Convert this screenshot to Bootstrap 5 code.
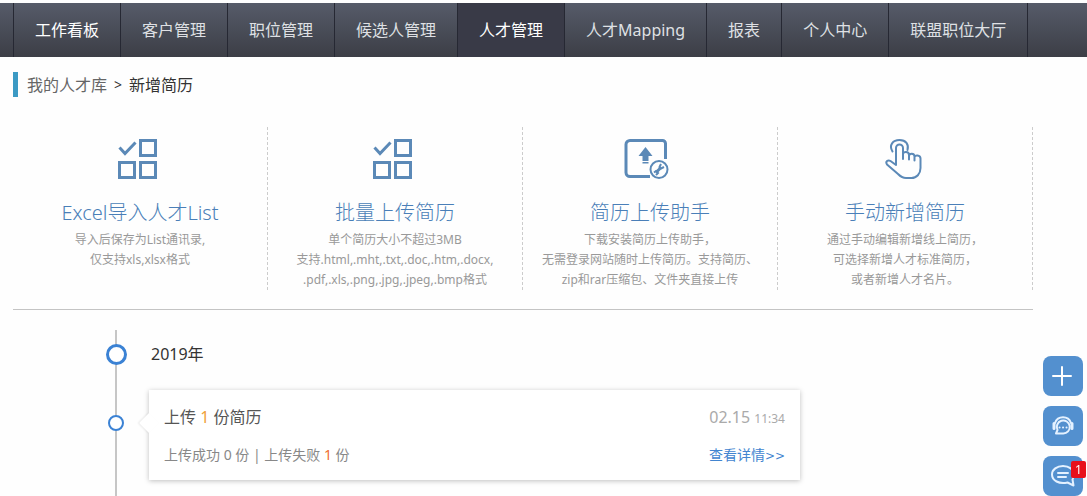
<!DOCTYPE html>
<html lang="zh-CN">
<head>
<meta charset="utf-8">
<meta name="viewport" content="width=device-width, initial-scale=1">
<title>新增简历</title>
<link href="https://cdn.jsdelivr.net/npm/bootstrap@5.3.0/dist/css/bootstrap.min.css" rel="stylesheet">
<style>
body{font-family:"Noto Sans","Noto Sans CJK SC",sans-serif;font-size:16px;line-height:24px;background:#fefefe;color:#333}
a{text-decoration:none}
.main-nav{margin-top:3px;padding:0 0 0 13px;background:linear-gradient(#565b69,#3c3e46)}
.main-nav .navbar-nav{border-left:1px solid #262833}
.main-nav .navbar-nav .nav-link{padding:15px 21px;border-right:1px solid #262833;color:#dfe0e4}
.main-nav .navbar-nav .nav-link:hover,.main-nav .navbar-nav .nav-link.active,.main-nav .navbar-nav .nav-link.home{color:#fff}
.main-nav .navbar-nav .nav-link.active{background:#393a47}
.page{max-width:1033px;padding-left:13px}
.crumbs{margin-top:15px;height:25px;border-left:5px solid #3c9ac4;padding-left:9px;gap:7px}
.crumbs a{color:#666}
.crumbs .sep{font-size:14px}
.features{margin-top:30px;padding-bottom:19px;border-bottom:1px solid #c4c4c4}
.feature{padding-top:12px;border-right:1px dashed #ccc;color:#999;font-size:12px;line-height:20px}
.feature svg{height:40px;margin-right:5px}
.feature h2{margin:17px 0 0;font-size:20px;line-height:34px;font-weight:300;color:#4a7fb8}
.icon-blue{color:#5b89b7}
.timeline{margin-top:20px;padding:12px 0 16px 92px}
.timeline::before{content:"";position:absolute;left:102px;top:0;bottom:0;width:2px;background:#c6c6c6}
.rail{width:22px}
.rail-item{padding-top:25px}
.dot{width:16px;height:16px;border:2px solid #3b82d4;border-radius:50%;background:#fff}
.dot-lg{width:21px;height:21px;border-width:3px}
.entries{gap:24px}
.entry{gap:22px}
.year{gap:24px}
.record{max-width:651px;padding:15px;background:#fff;color:#555;box-shadow:0 1px 5px rgba(0,0,0,.25)}
.record::before{content:"";position:absolute;left:-7px;top:26px;width:14px;height:14px;background:#fff;transform:rotate(45deg);box-shadow:-1px 1px 2px rgba(0,0,0,.08)}
.record-foot{margin-top:16px;font-size:14px;line-height:20px;color:#888}
.when{color:#aaa}
.when small{font-size:12px;line-height:1}
.num{color:#f0a13c}
.num-fail{color:#ef6f32}
.detail{color:#4285d0}
.arrows{font-family:"DejaVu Sans",sans-serif;font-size:12px;line-height:1}
.side-tools{right:4px;bottom:0;gap:10px}
.side-tools .btn{width:40px;height:40px;padding:0;border:0;border-radius:8px;background:#5390cf;color:#fff}
.count{right:-3px;top:5px;width:15px;height:17px;border-radius:2px;background:#e8101c;font-size:12px;line-height:17px}
</style>
</head>
<body class="d-flex flex-column min-vh-100">
<nav class="navbar navbar-expand main-nav">
  <ul class="navbar-nav">
    <li class="nav-item"><a class="nav-link home" href="#">工作看板</a></li>
    <li class="nav-item"><a class="nav-link" href="#">客户管理</a></li>
    <li class="nav-item"><a class="nav-link" href="#">职位管理</a></li>
    <li class="nav-item"><a class="nav-link" href="#">候选人管理</a></li>
    <li class="nav-item"><a class="nav-link active" aria-current="page" href="#">人才管理</a></li>
    <li class="nav-item"><a class="nav-link" href="#">人才Mapping</a></li>
    <li class="nav-item"><a class="nav-link" href="#">报表</a></li>
    <li class="nav-item"><a class="nav-link" href="#">个人中心</a></li>
    <li class="nav-item"><a class="nav-link" href="#">联盟职位大厅</a></li>
  </ul>
</nav>

<main class="page w-100 d-flex flex-column flex-grow-1">
  <div class="crumbs d-flex align-items-center"><a href="#">我的人才库</a><span class="sep">&gt;</span><span>新增简历</span></div>

  <section class="features row g-0 text-center">
    <a class="feature col-3" href="#">
      <svg class="icon-blue" width="40" height="40" viewBox="0 0 40 40" fill="none" stroke="currentColor" stroke-width="3" aria-hidden="true"><path d="M22.500 1.500h15v15h-15zM1.500 23.500h15v15h-15zM22.500 23.500h15v15h-15z"/><path d="M1.500 8.500l5.500 6L17.500 3.500"/></svg>
      <h2>Excel导入人才List</h2>
      <div>导入后保存为List通讯录,<br>仅支持xls,xlsx格式</div>
    </a>
    <a class="feature col-3" href="#">
      <svg class="icon-blue" width="40" height="40" viewBox="0 0 40 40" fill="none" stroke="currentColor" stroke-width="3" aria-hidden="true"><path d="M22.500 1.500h15v15h-15zM1.500 23.500h15v15h-15zM22.500 23.500h15v15h-15z"/><path d="M1.500 8.500l5.500 6L17.500 3.500"/></svg>
      <h2>批量上传简历</h2>
      <div>单个简历大小不超过3MB<br>支持.html,.mht,.txt,.doc,.htm,.docx,<br>.pdf,.xls,.png,.jpg,.jpeg,.bmp格式</div>
    </a>
    <a class="feature col-3" href="#">
      <svg class="icon-blue" width="54" height="40" viewBox="1 0 54 40" fill="none" stroke="currentColor" aria-hidden="true"><path stroke-width="3" d="M30 37.500H10a4 4 0 0 1-4-4v-28a4 4 0 0 1 4-4h32.500a3 3 0 0 1 3 3V20"/><path fill="currentColor" stroke="none" d="M25.500 8l7 9h-4v5h-6v-5h-4zM22.500 23h6v1.500h-6z"/><circle cx="39" cy="30.500" r="8.500" stroke-width="2"/><path stroke-width="3" d="M36 33.500l5-5"/><path stroke-width="2" d="M44 28l-3 1.500-1.500-1.500L41 25M34 33.500l2-1.500 2 2-2 2"/></svg>
      <h2>简历上传助手</h2>
      <div>下载安装简历上传助手，<br>无需登录网站随时上传简历。支持简历、<br>zip和rar压缩包、文件夹直接上传</div>
    </a>
    <a class="feature col-3" href="#">
      <svg class="icon-blue" width="40" height="40" viewBox="-1 0 40 40" fill="none" stroke="currentColor" stroke-width="2" stroke-linecap="round" stroke-linejoin="round" aria-hidden="true"><path d="M12 26V9a3.500 3.500 0 0 1 7 0v11M19 15.500c0-3.500 6-3.500 6 .5v4.500M25 17c0-3 5.500-3 5.500 .5v4M30.500 18.500c0-3 6-2.500 6 1V29c0 6-4 10-9 10h-5.500c-4 0-6-2-8-4L3 25.500c-2-3 1-5 3.500-3.500L12 26"/><path d="M8.500 12.500C4.500 6 9 1 15.500 1s9.500 4.500 8 10"/></svg>
      <h2>手动新增简历</h2>
      <div>通过手动编辑新增线上简历，<br>可选择新增人才标准简历，<br>或者新增人才名片。</div>
    </a>
  </section>

  <section class="timeline position-relative flex-grow-1">
    <div class="entries d-flex flex-column">
      <div class="year d-flex align-items-center">
        <div class="rail d-flex justify-content-center position-relative"><span class="dot dot-lg"></span></div>
        <div>2019年</div>
      </div>
      <div class="entry d-flex">
        <div class="rail rail-item d-flex justify-content-center position-relative"><span class="dot"></span></div>
        <article class="record position-relative flex-grow-1">
          <div class="d-flex justify-content-between">
            <span>上传 <span class="num">1</span> 份简历</span>
            <span class="when">02.15 <small>11:34</small></span>
          </div>
          <div class="record-foot d-flex justify-content-between">
            <span>上传成功 0 份 | 上传失败 <span class="num-fail">1</span> 份</span>
            <a class="detail" href="#">查看详情<span class="arrows">&gt;&gt;</span></a>
          </div>
        </article>
      </div>
    </div>
  </section>
</main>

<aside class="side-tools position-fixed d-flex flex-column">
  <button class="btn d-flex align-items-center justify-content-center" type="button" aria-label="新增"><svg width="22" height="22" viewBox="0 0 22 22" stroke="currentColor" stroke-width="2" stroke-linecap="round"><path d="M10 2v18M1 11h18"/></svg></button>
  <button class="btn d-flex align-items-center justify-content-center" type="button" aria-label="客服"><svg width="24" height="22" viewBox="0 0 24 22" fill="none" stroke="#e4f1ff" stroke-width="2" stroke-linecap="round"><path d="M4 8a8.500 8.500 0 0 1 16 0"/><path d="M3 8.500v5M21 8.500v5" stroke-width="3"/><path d="M5 18.500h7a6.500 6.500 0 1 0-5.500-3.500z" stroke-linejoin="round"/><path d="M8.500 12.500h.1M12 12.500h.1M15.500 12.500h.1"/></svg></button>
  <button class="btn d-flex align-items-center justify-content-center position-relative" type="button" aria-label="消息"><svg width="26" height="24" viewBox="0 0 26 24" fill="none" stroke="#e4f1ff" stroke-width="2" stroke-linecap="round" stroke-linejoin="round"><path d="M22.500 15.500l1 6-6-3C9 20.500 2 16.500 2 10.500 2 5.500 7 2 13 2s11 3.500 11 8.500c0 2-.5 3.500-1.500 5z"/><path d="M8 9h10M8 13h8"/></svg><span class="count position-absolute">1</span></button>
</aside>
<script src="https://cdn.jsdelivr.net/npm/bootstrap@5.3.0/dist/js/bootstrap.bundle.min.js"></script>
</body>
</html>
